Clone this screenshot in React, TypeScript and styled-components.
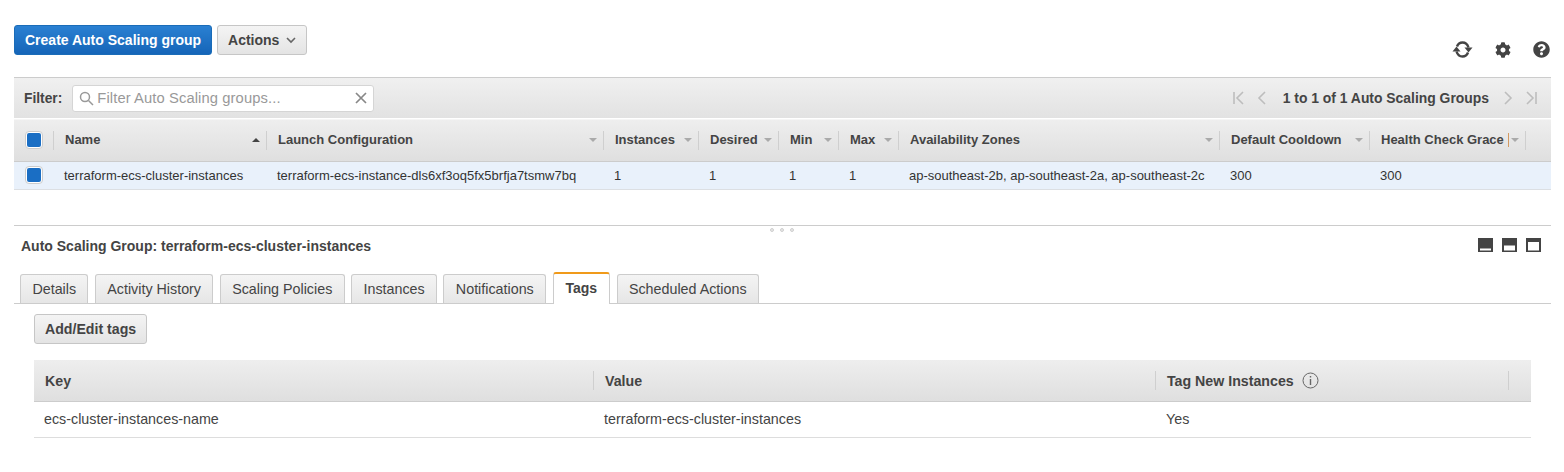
import styled, { createGlobalStyle } from 'styled-components';
import { FaCog, FaQuestionCircle } from 'react-icons/fa';

const GlobalStyle = createGlobalStyle`
	html, body {
		margin: 0;
		background: #fff;
		font-family: "Liberation Sans", Arial, sans-serif;
		font-size: 14px;
		color: #444;
	}
`;

const Page = styled.div`
	width: 1564px;
	height: 472px;
	padding: 25px 13px 0 14px;
	box-sizing: border-box;
	overflow: hidden;
`;

const Toolbar = styled.div`
	display: flex;
	align-items: flex-start;
	height: 52px;
	gap: 5px;
`;

const Button = styled.button<{ $primary?: boolean }>`
	height: 30px;
	padding: 0 10px;
	border-radius: 3px;
	font: bold 14px "Liberation Sans", Arial, sans-serif;
	display: flex;
	align-items: center;
	gap: 7px;
	border: 1px solid ${(p) => (p.$primary ? '#1a6cb8' : '#c6c6c6')};
	color: ${(p) => (p.$primary ? '#fff' : '#444')};
	background: ${(p) =>
		p.$primary
			? 'linear-gradient(#2a80d2, #1565b8)'
			: 'linear-gradient(#f4f4f4, #e4e4e4)'};
`;

const AddButton = styled(Button)`
	font-size: 14.15px;
`;

const ToolIcons = styled.div`
	margin-left: auto;
	margin-top: 15px;
	display: flex;
	align-items: center;
	gap: 22px;
	color: #444;
	padding-right: 1px;
`;

const FilterBar = styled.div`
	height: 41px;
	box-sizing: border-box;
	display: flex;
	align-items: center;
	padding-left: 10px;
	border-top: 1px solid #ccc;
	background: linear-gradient(#f0f0f0, #e2e2e2);
`;

const FilterLabel = styled.b`
	margin-right: 10px;
	font-size: 13.8px;
`;

const SearchBox = styled.div`
	width: 302px;
	height: 27px;
	box-sizing: border-box;
	display: flex;
	align-items: center;
	padding: 0 6px;
	gap: 3px;
	background: #fff;
	border: 1px solid #d5d5d5;
	border-radius: 3px;
	color: #999;
	font-size: 14.75px;
	letter-spacing: 0.1px;
`;

const Clear = styled.svg`
	margin-left: auto;
`;

const Pager = styled.div`
	margin-left: auto;
	display: flex;
	align-items: center;
	padding-right: 13px;
	gap: 9px;
	font-weight: bold;
	font-size: 13.9px;
`;

const PagerText = styled.span`
	margin: 0 3px 0 5px;
`;

const HeaderRow = styled.div<{ $columns: string }>`
	display: grid;
	grid-template-columns: ${(p) => p.$columns};
	height: 43px;
	box-sizing: border-box;
	padding-bottom: 2px;
	border-top: 1px solid #f6f6f6;
	border-bottom: 1px solid #ccc;
	background: linear-gradient(#eeeeee, #dfdfdf);
	margin-top: 1px;
`;

const HeadCell = styled.div`
	position: relative;
	display: flex;
	align-items: center;
	padding: 0 7px 0 11px;
	font-weight: bold;
	font-size: 13px;
	white-space: nowrap;
	&::after {
		content: '';
		position: absolute;
		right: 0;
		top: 11px;
		height: 19px;
		width: 1px;
		background: #cfcfcf;
	}
`;

const SortCaret = styled.span<{ $up?: boolean }>`
	margin-left: auto;
	width: 0;
	height: 0;
	border-left: 4px solid transparent;
	border-right: 4px solid transparent;
	${(p) =>
		p.$up
			? 'border-bottom: 4px solid #444;'
			: 'border-top: 4px solid #aaa;'}
`;

const ColumnPin = styled.span`
	width: 1px;
	height: 14px;
	background: #d39a62;
	margin-left: 4px;
`;

const DataRow = styled.div<{ $columns: string }>`
	display: grid;
	grid-template-columns: ${(p) => p.$columns};
	height: 28px;
	box-sizing: border-box;
	padding-bottom: 1px;
	align-items: center;
	background: #e9f1fb;
	border-bottom: 1px solid #dcdfe3;
	color: #333;
	font-size: 13px;
`;

const DataCell = styled.div`
	padding-left: 10px;
	white-space: nowrap;
`;

const CheckCell = styled.div`
	display: flex;
	align-items: center;
	justify-content: center;
	padding-right: 1px;
`;

const Check = styled.span`
	width: 18px;
	height: 18px;
	box-sizing: border-box;
	border: 1px solid #ccc;
	border-radius: 4px;
	background: #fff;
	padding: 1px;
	display: block;
	&::before {
		content: '';
		display: block;
		width: 14px;
		height: 14px;
		border-radius: 2px;
		background: #1a6ec4;
	}
`;

const Splitter = styled.div`
	position: relative;
	margin-top: 35px;
	height: 1px;
	background: #ccc;
`;

const Grips = styled.div`
	position: absolute;
	top: 3px;
	left: 756px;
	display: flex;
	gap: 6px;
`;

const Grip = styled.span`
	width: 4px;
	height: 4px;
	border-radius: 50%;
	background: #e6e6e6;
	border: 1px solid #d0d0d0;
	box-sizing: border-box;
`;

const DetailHead = styled.div`
	display: flex;
	align-items: center;
	height: 40px;
	padding: 0 10px 0 7px;
`;

const DetailTitle = styled.b`
	font-size: 14px;
`;

const PaneIcons = styled.div`
	margin-left: auto;
	display: flex;
	gap: 9px;
	margin-top: -3px;
`;

const Tabs = styled.div`
	display: flex;
	align-items: flex-end;
	gap: 6.4px;
	height: 37px;
	padding-left: 6px;
	border-bottom: 1px solid #ccc;
`;

const Tab = styled.div<{ $active?: boolean }>`
	height: 29px;
	box-sizing: border-box;
	padding: ${(p) => (p.$active ? '0 12px 3px' : '0 11.4px 1px')};
	display: flex;
	align-items: center;
	border: 1px solid #ccc;
	border-bottom: none;
	border-radius: 3px 3px 0 0;
	background: ${(p) =>
		p.$active ? '#fff' : 'linear-gradient(#f4f4f4, #e6e6e6)'};
	font-size: ${(p) => (p.$active ? '14px' : '14.3px')};
	font-weight: ${(p) => (p.$active ? 'bold' : 'normal')};
	${(p) => p.$active && 'border-top: 2px solid #f09a1a; margin-bottom: -1px; height: 32px;'}
`;

const TagSection = styled.div`
	padding: 10px 20px 0;
`;

const TagHeader = styled(HeaderRow)`
	margin-top: 16px;
	height: 42px;
	padding-bottom: 0;
	border-top: none;
`;

const TagHeadCell = styled(HeadCell)<{ $plain?: boolean }>`
	${(p) => p.$plain && '&::after { display: none; }'}
	gap: 8px;
	font-size: 14.2px;
`;

const TagRow = styled.div<{ $columns: string }>`
	display: grid;
	grid-template-columns: ${(p) => p.$columns};
	height: 36px;
	box-sizing: border-box;
	padding-bottom: 2px;
	align-items: center;
	border-bottom: 1px solid #ddd;
	color: #444;
	font-size: 14.3px;
`;

const COLUMNS = '40px 213px 337px 95px 80px 60px 60px 321px 150px 156px 25px';
const TAG_COLUMNS = '560px 562px 353px 22px';

const headers = [
	'Name',
	'Launch Configuration',
	'Instances',
	'Desired',
	'Min',
	'Max',
	'Availability Zones',
	'Default Cooldown',
];

const cells = [
	'terraform-ecs-cluster-instances',
	'terraform-ecs-instance-dls6xf3oq5fx5brfja7tsmw7bq',
	'1',
	'1',
	'1',
	'1',
	'ap-southeast-2b, ap-southeast-2a, ap-southeast-2c',
	'300',
	'300',
];

const tabs = [
	'Details',
	'Activity History',
	'Scaling Policies',
	'Instances',
	'Notifications',
	'Tags',
	'Scheduled Actions',
];

function PagerIcon({ d }: { d: string }) {
	return (
		<svg width="14" height="16" viewBox="0 0 14 16" fill="none" stroke="#bdbdbd" strokeWidth="1.6">
			<path d={d} />
		</svg>
	);
}

function PaneIcon({ y, h }: { y: number; h: number }) {
	return (
		<svg width="15" height="14" viewBox="0 0 15 14">
			<rect width="15" height="14" fill="#444" />
			<rect x="2" y={y} width="11" height={h} fill="#fff" />
		</svg>
	);
}

function RefreshIcon() {
	return (
		<svg width="21" height="19" viewBox="0 0 21 19" fill="none" stroke="#444" strokeWidth="2.4">
			<path d="M5 6.5C6 3.8 8 2.5 10.5 2.5c2.8 0 5 1.8 6 5" />
			<path d="M16 12.5c-1 2.7-3 4-5.5 4-2.8 0-5-1.8-6-5" />
			<path d="M12.5 7.5h8l-4 5z" fill="#444" stroke="none" />
			<path d="M8.5 11.5h-8l4-5z" fill="#444" stroke="none" />
		</svg>
	);
}

function App() {
	return (
		<Page>
			<GlobalStyle />
			<Toolbar>
				<Button $primary>Create Auto Scaling group</Button>
				<Button>
					Actions
					<svg width="10" height="7" viewBox="0 0 10 7" fill="none" stroke="#666" strokeWidth="1.6">
						<path d="M1 1l4 4 4-4" />
					</svg>
				</Button>
				<ToolIcons>
					<RefreshIcon />
					<FaCog size={16} />
					<FaQuestionCircle size={17} />
				</ToolIcons>
			</Toolbar>
			<FilterBar>
				<FilterLabel>Filter:</FilterLabel>
				<SearchBox>
					<svg width="15" height="15" viewBox="0 0 15 15" fill="none" stroke="#999" strokeWidth="1.5">
						<circle cx="6" cy="6" r="4.5" />
						<path d="M9.5 9.5L14 14" />
					</svg>
					Filter Auto Scaling groups...
					<Clear width="12" height="12" viewBox="0 0 12 12" fill="none" stroke="#888" strokeWidth="1.7">
						<path d="M1 1l10 10M11 1L1 11" />
					</Clear>
				</SearchBox>
				<Pager>
					<PagerIcon d="M2 2v12M11 2L5 8l6 6" />
					<PagerIcon d="M10 2L4 8l6 6" />
					<PagerText>1 to 1 of 1 Auto Scaling Groups</PagerText>
					<PagerIcon d="M4 2l6 6-6 6" />
					<PagerIcon d="M12 2v12M3 2l6 6-6 6" />
				</Pager>
			</FilterBar>
			<HeaderRow $columns={COLUMNS}>
				<HeadCell>
					<Check />
				</HeadCell>
				{headers.map((h, i) => (
					<HeadCell key={h}>
						{h}
						<SortCaret $up={i === 0} />
					</HeadCell>
				))}
				<HeadCell>
					Health Check Grace
					<ColumnPin />
					<SortCaret />
				</HeadCell>
				<div />
			</HeaderRow>
			<DataRow $columns={COLUMNS}>
				<CheckCell>
					<Check />
				</CheckCell>
				{cells.map((c, i) => (
					<DataCell key={i}>{c}</DataCell>
				))}
			</DataRow>
			<Splitter>
				<Grips>
					<Grip />
					<Grip />
					<Grip />
				</Grips>
			</Splitter>
			<DetailHead>
				<DetailTitle>Auto Scaling Group: terraform-ecs-cluster-instances</DetailTitle>
				<PaneIcons>
					<PaneIcon y={10.5} h={2} />
					<PaneIcon y={7.5} h={5} />
					<PaneIcon y={4} h={8.5} />
				</PaneIcons>
			</DetailHead>
			<Tabs>
				{tabs.map((t) => (
					<Tab key={t} $active={t === 'Tags'}>
						{t}
					</Tab>
				))}
			</Tabs>
			<TagSection>
				<AddButton>Add/Edit tags</AddButton>
				<TagHeader $columns={TAG_COLUMNS}>
					<TagHeadCell>Key</TagHeadCell>
					<TagHeadCell>Value</TagHeadCell>
					<TagHeadCell>
						Tag New Instances
						<svg width="17" height="17" viewBox="0 0 17 17" fill="none" stroke="#666">
							<circle cx="8.5" cy="8.5" r="7.5" />
							<path d="M8.5 7v6M8.5 4v1.5" strokeWidth="1.4" />
						</svg>
					</TagHeadCell>
					<TagHeadCell $plain />
				</TagHeader>
				<TagRow $columns={TAG_COLUMNS}>
					<DataCell>ecs-cluster-instances-name</DataCell>
					<DataCell>terraform-ecs-cluster-instances</DataCell>
					<DataCell>Yes</DataCell>
				</TagRow>
			</TagSection>
		</Page>
	);
}

export default App;
